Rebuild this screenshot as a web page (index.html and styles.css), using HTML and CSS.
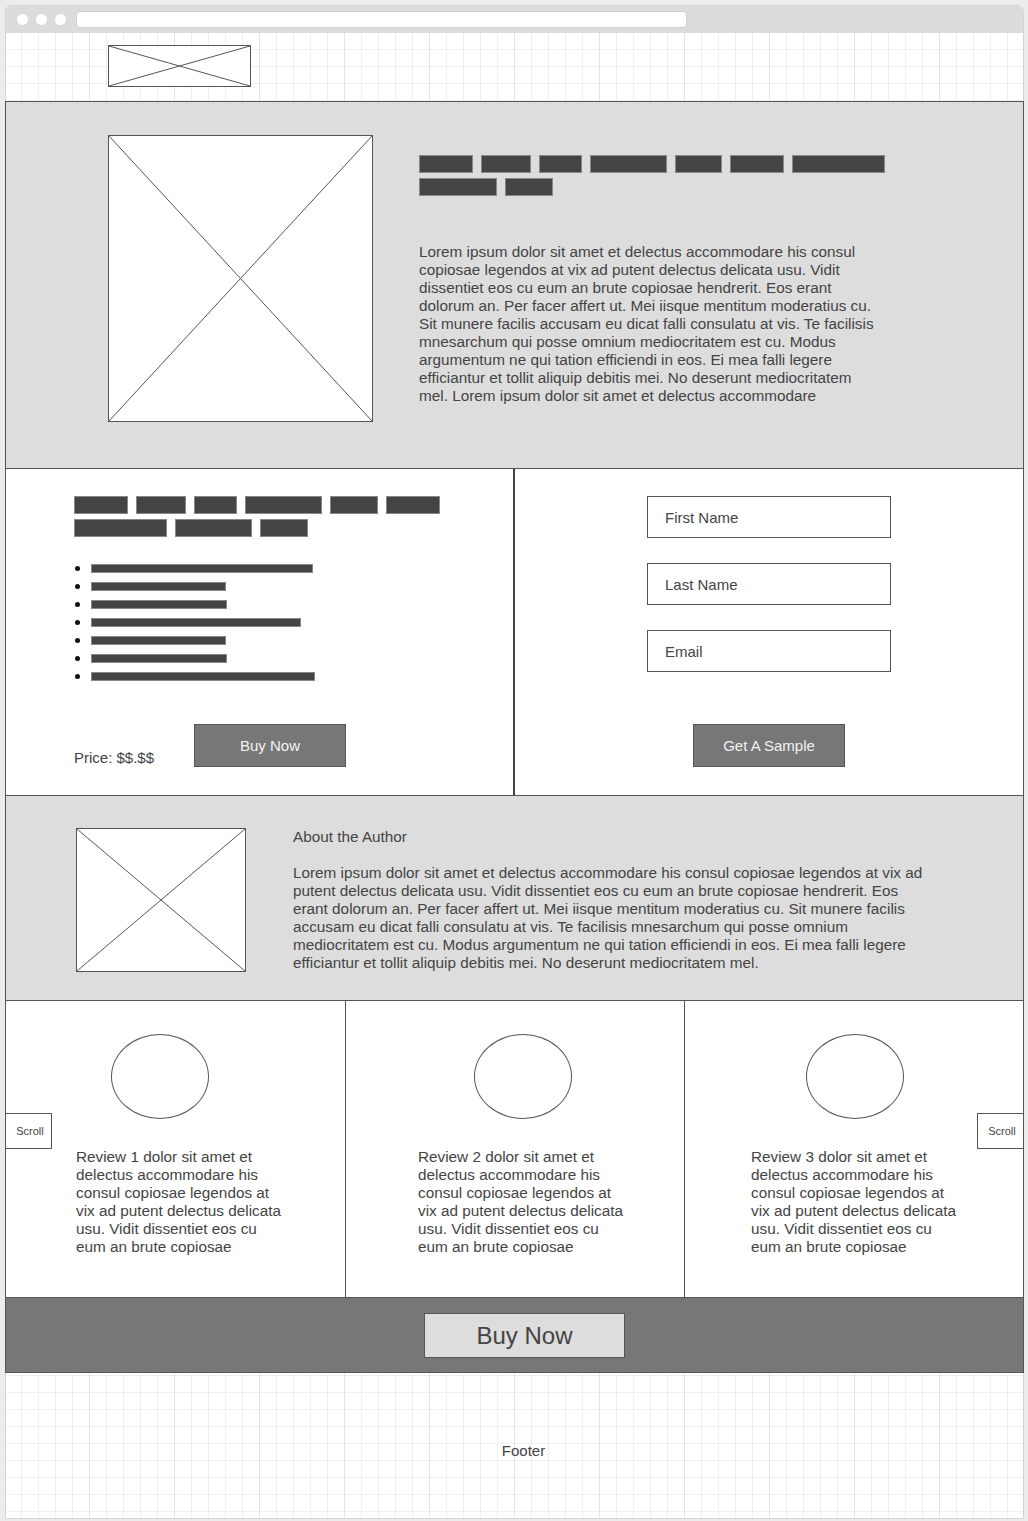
FILE: index.html
```html
<!DOCTYPE html>
<html lang="en">
<head>
    <meta charset="UTF-8">
    <meta name="viewport" content="width=device-width, initial-scale=1.0">
    <title>Book Landing Page Wireframe</title>
    <link rel="stylesheet" href="styles.css">
</head>
<body>
    <div class="window">
        <!-- Barra del browser -->
        <div class="titlebar">
            <span class="dot"></span>
            <span class="dot"></span>
            <span class="dot"></span>
            <div class="urlbar"></div>
        </div>

        <div class="page">
            <!-- Logo -->
            <header class="site-header">
                <div class="placeholder logo">
                    <svg viewBox="0 0 100 100" preserveAspectRatio="none"><line x1="0" y1="0" x2="100" y2="100"/><line x1="100" y1="0" x2="0" y2="100"/></svg>
                </div>
            </header>

            <!-- Hero -->
            <section class="hero">
                <div class="placeholder cover">
                    <svg viewBox="0 0 100 100" preserveAspectRatio="none"><line x1="0" y1="0" x2="100" y2="100"/><line x1="100" y1="0" x2="0" y2="100"/></svg>
                </div>
                <div class="hero-text">
                    <div class="title-bars hero-title">
                        <span class="bar" style="width:54px"></span>
                        <span class="bar" style="width:50px"></span>
                        <span class="bar" style="width:43px"></span>
                        <span class="bar" style="width:77px"></span>
                        <span class="bar" style="width:47px"></span>
                        <span class="bar" style="width:54px"></span>
                        <span class="bar" style="width:93px"></span>
                        <span class="bar" style="width:78px"></span>
                        <span class="bar" style="width:48px"></span>
                    </div>
                    <p class="hero-copy">Lorem ipsum dolor sit amet et delectus accommodare his consul copiosae legendos at vix ad putent delectus delicata usu. Vidit dissentiet eos cu eum an brute copiosae hendrerit. Eos erant dolorum an. Per facer affert ut. Mei iisque mentitum moderatius cu. Sit munere facilis accusam eu dicat falli consulatu at vis. Te facilisis mnesarchum qui posse omnium mediocritatem est cu. Modus argumentum ne qui tation efficiendi in eos. Ei mea falli legere efficiantur et tollit aliquip debitis mei. No deserunt mediocritatem mel. Lorem ipsum dolor sit amet et delectus accommodare</p>
                </div>
            </section>

            <!-- Acquisto e campione -->
            <section class="offer">
                <div class="offer-info">
                    <div class="title-bars offer-title">
                        <span class="bar" style="width:54px"></span>
                        <span class="bar" style="width:50px"></span>
                        <span class="bar" style="width:43px"></span>
                        <span class="bar" style="width:77px"></span>
                        <span class="bar" style="width:48px"></span>
                        <span class="bar" style="width:54px"></span>
                        <span class="bar" style="width:93px"></span>
                        <span class="bar" style="width:77px"></span>
                        <span class="bar" style="width:48px"></span>
                    </div>
                    <ul class="features">
                        <li><span class="line" style="width:222px"></span></li>
                        <li><span class="line" style="width:135px"></span></li>
                        <li><span class="line" style="width:136px"></span></li>
                        <li><span class="line" style="width:210px"></span></li>
                        <li><span class="line" style="width:135px"></span></li>
                        <li><span class="line" style="width:136px"></span></li>
                        <li><span class="line" style="width:224px"></span></li>
                    </ul>
                    <div class="price-row">
                        <span class="price">Price: $$.$$</span>
                        <button class="btn">Buy Now</button>
                    </div>
                </div>
                <form class="sample-form">
                    <input type="text" placeholder="First Name">
                    <input type="text" placeholder="Last Name">
                    <input type="email" placeholder="Email">
                    <button type="button" class="btn sample-btn">Get A Sample</button>
                </form>
            </section>

            <!-- Autore -->
            <section class="author">
                <div class="placeholder author-photo">
                    <svg viewBox="0 0 100 100" preserveAspectRatio="none"><line x1="0" y1="0" x2="100" y2="100"/><line x1="100" y1="0" x2="0" y2="100"/></svg>
                </div>
                <div class="author-text">
                    <h2>About the Author</h2>
                    <p>Lorem ipsum dolor sit amet et delectus accommodare his consul copiosae legendos at vix ad putent delectus delicata usu. Vidit dissentiet eos cu eum an brute copiosae hendrerit. Eos erant dolorum an. Per facer affert ut. Mei iisque mentitum moderatius cu. Sit munere facilis accusam eu dicat falli consulatu at vis. Te facilisis mnesarchum qui posse omnium mediocritatem est cu. Modus argumentum ne qui tation efficiendi in eos. Ei mea falli legere efficiantur et tollit aliquip debitis mei. No deserunt mediocritatem mel.</p>
                </div>
            </section>

            <!-- Recensioni -->
            <section class="reviews">
                <div class="review review-1">
                    <div class="avatar"></div>
                    <p>Review 1 dolor sit amet et delectus accommodare his consul copiosae legendos at vix ad putent delectus delicata usu. Vidit dissentiet eos cu eum an brute copiosae</p>
                </div>
                <div class="review review-2">
                    <div class="avatar"></div>
                    <p>Review 2 dolor sit amet et delectus accommodare his consul copiosae legendos at vix ad putent delectus delicata usu. Vidit dissentiet eos cu eum an brute copiosae</p>
                </div>
                <div class="review review-3">
                    <div class="avatar"></div>
                    <p>Review 3 dolor sit amet et delectus accommodare his consul copiosae legendos at vix ad putent delectus delicata usu. Vidit dissentiet eos cu eum an brute copiosae</p>
                </div>
                <button class="scroll scroll-left">Scroll</button>
                <button class="scroll scroll-right">Scroll</button>
            </section>

            <!-- Call to action -->
            <section class="cta">
                <button class="cta-btn">Buy Now</button>
            </section>

            <footer class="site-footer">Footer</footer>
        </div>
    </div>
</body>
</html>
```

FILE: styles.css
```css
* {
    box-sizing: border-box;
}
body {
    margin: 0;
    padding: 0;
    background-color: #ececec;
    font-family: "Liberation Sans", Arial, sans-serif;
    font-size: 15.3px;
    line-height: 18px;
    color: #444;
}

/* Finestra del browser */
.window {
    width: 1019px;
    margin: 5px 0 0 5px;
    border: 1px solid #d4d4d4;
    border-radius: 6px 6px 0 0;
    background: #fff;
}
.titlebar {
    height: 27px;
    display: flex;
    align-items: center;
    gap: 8px;
    padding-left: 11px;
    background: #dcdcdc;
    border-radius: 5px 5px 0 0;
}
.dot {
    width: 11px;
    height: 11px;
    border-radius: 50%;
    background: #fff;
}
.urlbar {
    width: 611px;
    height: 17px;
    margin-left: 2px;
    background: #fff;
    border: 1px solid #d0d0d0;
    border-radius: 4px;
}

/* Pagina con griglia */
.page {
    background-color: #fff;
    background-image:
        linear-gradient(to right, #e4e4e4 1px, transparent 1px),
        linear-gradient(to right, #efefef 1px, transparent 1px),
        linear-gradient(to bottom, #efefef 1px, transparent 1px);
    background-size: 85px 100%, 17px 17px, 17px 17px;
    background-position: 83px 0, 15px 0, 0 16px;
}
.placeholder {
    background: #fff;
    border: 1px solid #555;
}
.placeholder svg {
    display: block;
    width: 100%;
    height: 100%;
}
.placeholder line {
    stroke: #555;
    stroke-width: 1;
    vector-effect: non-scaling-stroke;
}

.site-header {
    height: 68px;
    padding: 12px 0 0 102px;
}
.logo {
    width: 143px;
    height: 42px;
}

section {
    margin: 0 -1px;
    border: 1px solid #555;
    border-bottom: none;
}

/* Hero */
.hero {
    height: 367px;
    display: flex;
    align-items: flex-start;
    padding: 33px 0 0 102px;
    background: #dddddd;
}
.cover {
    width: 265px;
    height: 287px;
    flex-shrink: 0;
}
.hero-text {
    margin-left: 46px;
    padding-top: 20px;
}
.title-bars {
    display: flex;
    flex-wrap: wrap;
    gap: 5px 8px;
}
.hero-title {
    width: 470px;
}
.offer-title {
    width: 370px;
}
.bar {
    height: 18px;
    background: #444;
    border: 1px solid #888;
}
.hero-copy {
    width: 465px;
    margin: 47px 0 0;
}

/* Offerta */
.offer {
    height: 327px;
    display: grid;
    grid-template-columns: 509px 1fr;
    background: #fff;
}
.offer-info {
    padding: 27px 0 0 68px;
    border-right: 2px solid #444;
}
.features {
    margin: 22px 0 0;
    padding-left: 17px;
    color: #111;
}
.line {
    display: inline-block;
    height: 9px;
    vertical-align: middle;
    background: #444;
    border: 1px solid #888;
}
.price-row {
    display: flex;
    align-items: flex-end;
    margin-top: 39px;
}
.price {
    width: 120px;
    font-size: 15px;
}
.btn {
    width: 152px;
    height: 43px;
    background: #777;
    border: 1px solid #555;
    color: #f2f2f2;
    font-family: inherit;
    font-size: 15px;
    cursor: pointer;
}
.sample-form {
    display: flex;
    flex-direction: column;
    align-items: center;
    gap: 25px;
    margin: 0;
    padding-top: 27px;
}
.sample-form input {
    width: 244px;
    height: 42px;
    padding: 0 17px;
    border: 1px solid #555;
    font-family: inherit;
    font-size: 15px;
    color: #444;
}
.sample-form input::placeholder {
    color: #444;
}
.sample-form .sample-btn {
    margin-top: 27px;
}

/* Autore */
.author {
    height: 205px;
    display: flex;
    align-items: flex-start;
    padding: 32px 0 0 70px;
    background: #dddddd;
}
.author-photo {
    width: 170px;
    height: 144px;
    flex-shrink: 0;
}
.author-text {
    margin-left: 47px;
}
.author-text h2 {
    margin: 0;
    font-size: 15.3px;
    font-weight: normal;
}
.author-text p {
    width: 636px;
    margin: 18px 0 0;
}

/* Recensioni */
.reviews {
    position: relative;
    height: 297px;
    display: grid;
    grid-template-columns: 339px 339px 1fr;
    background: #fff;
}
.review {
    padding-top: 33px;
}
.review + .review {
    border-left: 1px solid #555;
}
.avatar {
    width: 98px;
    height: 85px;
    border: 1px solid #555;
    border-radius: 50%;
}
.review p {
    width: 208px;
    margin: 29px 0 0;
}
.review-1 {
    padding-left: 70px;
}
.review-1 .avatar {
    margin-left: 35px;
}
.review-2 {
    padding-left: 72px;
}
.review-2 .avatar {
    margin-left: 56px;
}
.review-3 {
    padding-left: 66px;
}
.review-3 .avatar {
    margin-left: 55px;
}
.scroll {
    position: absolute;
    top: 112px;
    width: 47px;
    height: 36px;
    padding: 0 0 0 3px;
    background: #fff;
    border: 1px solid #555;
    font-family: inherit;
    font-size: 11px;
    color: #444;
}
.scroll-left {
    left: -1px;
}
.scroll-right {
    right: -1px;
}

/* Call to action */
.cta {
    height: 76px;
    padding: 15px 0 0 418px;
    background: #777;
    border-bottom: 1px solid #555;
}
.cta-btn {
    width: 201px;
    height: 45px;
    background: #dddddd;
    border: 1px solid #555;
    font-family: inherit;
    font-size: 24px;
    color: #444;
    cursor: pointer;
}

.site-footer {
    height: 145px;
    padding: 69px 0 0 18px;
    font-size: 15px;
    text-align: center;
}
```
